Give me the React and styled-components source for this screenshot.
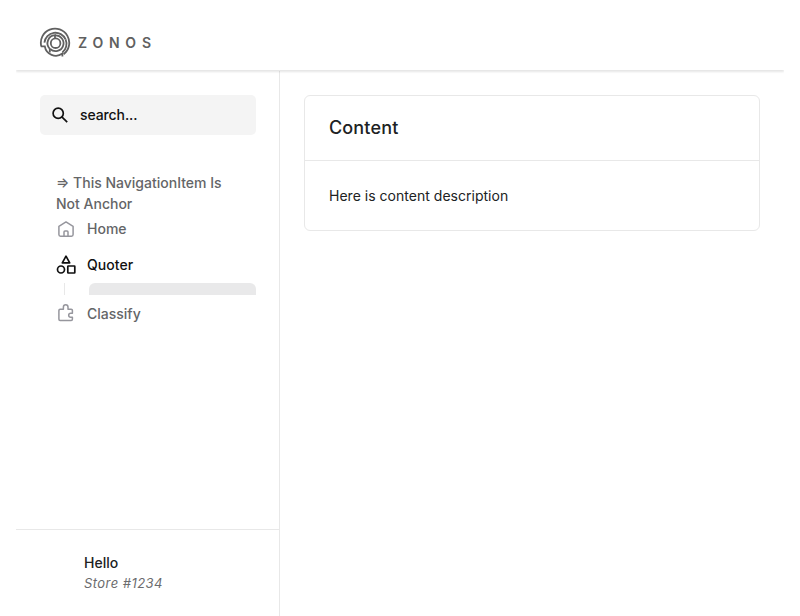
import React from "react";
import styled, { createGlobalStyle } from "styled-components";

const GlobalStyle = createGlobalStyle`
  *, *::before, *::after { box-sizing: border-box; }
  body {
    margin: 0;
    background: #fff;
    color: #202223;
    font-family: Inter, "Liberation Sans", sans-serif;
    font-size: 14px;
    line-height: 21px;
    -webkit-font-smoothing: antialiased;
  }
`;

const Page = styled.div`
  display: flex;
  flex-direction: column;
  height: 616px;
  padding: 16px 16px 0;
  overflow: hidden;
`;

const Header = styled.header`
  display: flex;
  align-items: center;
  flex: none;
  height: 54px;
  padding-left: 23px;
  box-shadow: 0 2px 2px rgba(0, 0, 0, 0.1), 0 0 1px rgba(0, 0, 0, 0.02);
  clip-path: inset(0 0 -5px 0);
`;

const Logo = styled.svg`
  display: block;
`;

const Body = styled.div`
  display: flex;
  flex: 1;
  min-height: 0;
  padding-top: 1px;
`;

const Sidebar = styled.aside`
  display: flex;
  flex-direction: column;
  width: 264px;
  border-right: 1px solid #e8e8e8;
`;

const Search = styled.label`
  display: flex;
  align-items: center;
  gap: 12px;
  height: 40px;
  margin: 24px 23px 0 24px;
  padding: 0 12px;
  border-radius: 5px;
  background: #f4f4f4;
  color: #111;
`;

const SearchInput = styled.input`
  flex: 1;
  min-width: 0;
  padding: 0;
  border: 0;
  outline: 0;
  background: transparent;
  font: 500 14px/20px Inter, sans-serif;
  letter-spacing: -0.1px;
  color: inherit;
  &::placeholder {
    color: #111;
    opacity: 1;
  }
`;

const Nav = styled.nav`
  flex: 1;
  padding: 37px 23px 0 40px;
`;

const NavText = styled.div`
  width: 176px;
  font-weight: 500;
  color: #646567;
`;

const NavItem = styled.a`
  display: flex;
  align-items: center;
  gap: 11px;
  height: ${(p) => p.$height || 29}px;
  font-weight: 500;
  letter-spacing: ${(p) => (p.$active ? "0.05px" : "0")};
  color: ${(p) => (p.$active ? "#111" : "#646567")};
  svg {
    flex: none;
    color: ${(p) => (p.$active ? "#111" : "#96969d")};
  }
`;

const SubNav = styled.div`
  display: flex;
  height: 12px;
  margin: -2px 0 2px 8px;
  padding-left: 24px;
  border-left: 1px solid #e8e8e8;
  overflow: hidden;
`;

const SubItem = styled.div`
  flex: 1;
  height: 32px;
  border-radius: 6px;
  background: #e9e9ea;
`;

const Account = styled.footer`
  height: 87px;
  padding: 23px 0 0 68px;
  border-top: 1px solid #e8e8e8;
  line-height: 20px;
`;

const AccountName = styled.div`
  font-weight: 500;
`;

const StoreName = styled.div`
  font-size: 13px;
  font-style: italic;
  color: #6b6c6e;
  letter-spacing: 0.45px;
`;

const Main = styled.main`
  flex: 1;
  padding: 24px;
`;

const Card = styled.section`
  border: 1px solid #e8e8e8;
  border-radius: 6px;
`;

const CardHeader = styled.h2`
  display: flex;
  align-items: center;
  height: 65px;
  margin: 0;
  padding: 0 24px 1px;
  border-bottom: 1px solid #e8e8e8;
  font-size: 18px;
  font-weight: 500;
  letter-spacing: 0.15px;
`;

const CardBody = styled.p`
  margin: 0;
  padding: 24px 24px 24px;
  letter-spacing: 0.02px;
`;

const ZonosLogo = () => (
  <Logo width="120" height="32" viewBox="0 0 120 32" role="img" aria-label="Zonos">
    <g transform="translate(0.4 0)" fill="none" stroke="#606060" strokeWidth="1.8">
      <path d="M1.9 19.4A14.2 14.2 0 1 1 24.2 27.2" />
      <path d="M1.4 19.4H5.4A11.2 11.2 0 0 0 23 26.6V29.6" />
      <path d="M5 15.6A11.1 11.1 0 0 1 26.2 12.4" />
      <path d="M26.2 12.4A11.1 11.1 0 0 1 23 25.4" />
      <path d="M10.4 25.4V21.8A8 8 0 0 1 15.6 8.2V11" />
      <path d="M15.6 8.4A7.9 7.9 0 1 1 10.8 22" />
      <circle cx="16.2" cy="16.2" r="4.8" />
    </g>
    <text x="39" y="21" textLength="73" fill="#606060" fontFamily="Inter, sans-serif" fontSize="14" fontWeight="600">
      ZONOS
    </text>
  </Logo>
);

const SearchIcon = () => (
  <svg width="16" height="16" viewBox="0 0 16 16" fill="none" stroke="currentColor" strokeWidth="1.7">
    <circle cx="6.2" cy="6.2" r="5.1" />
    <path d="m9.8 9.8 5.4 5.4" />
  </svg>
);

const HomeIcon = () => (
  <svg width="20" height="20" viewBox="0 0 20 20" fill="none" stroke="currentColor" strokeWidth="1.5" strokeLinejoin="round">
    <path d="M2.9 7.3 10 2.9l7.1 4.4v8.3a1.6 1.6 0 0 1-1.6 1.6h-11a1.6 1.6 0 0 1-1.6-1.6Z" />
    <path d="M8 17v-4a1 1 0 0 1 1-1h2a1 1 0 0 1 1 1v4" />
  </svg>
);

const ShapesIcon = () => (
  <svg width="20" height="20" viewBox="0 -1.5 20 20" fill="none" stroke="currentColor" strokeWidth="1.7" strokeLinejoin="round">
    <path d="M10 .7 13.7 7.3H6.3Z" />
    <circle cx="5" cy="14" r="3.5" />
    <rect x="11.8" y="10.5" width="7" height="7" rx=".4" />
  </svg>
);

const PuzzleIcon = () => (
  <svg width="20" height="20" viewBox="0 0 20 20" fill="none" stroke="currentColor" strokeWidth="1.5" strokeLinejoin="round">
    <path d="M4.1 6.2h3.3V4A2.3 2.3 0 0 1 12 4v2.2h3.2a1.2 1.2 0 0 1 1.2 1.2v2.9h-1.7a2 2 0 0 0 0 4h1.7v1.9a1.2 1.2 0 0 1-1.2 1.2H4.1a1.2 1.2 0 0 1-1.2-1.2V7.4a1.2 1.2 0 0 1 1.2-1.2Z" />
  </svg>
);

export default function App() {
  return (
    <>
      <GlobalStyle />
      <Page>
        <Header>
          <ZonosLogo />
        </Header>
        <Body>
          <Sidebar>
            <Search>
              <SearchIcon />
              <SearchInput placeholder="search..." aria-label="Search" />
            </Search>
            <Nav>
              <NavText>⇒ This NavigationItem Is Not Anchor</NavText>
              <NavItem>
                <HomeIcon />
                Home
              </NavItem>
              <NavItem $active $height={42}>
                <ShapesIcon />
                Quoter
              </NavItem>
              <SubNav>
                <SubItem />
              </SubNav>
              <NavItem $height={32}>
                <PuzzleIcon />
                Classify
              </NavItem>
            </Nav>
            <Account>
              <AccountName>Hello</AccountName>
              <StoreName>Store #1234</StoreName>
            </Account>
          </Sidebar>
          <Main>
            <Card>
              <CardHeader>Content</CardHeader>
              <CardBody>Here is content description</CardBody>
            </Card>
          </Main>
        </Body>
      </Page>
    </>
  );
}
